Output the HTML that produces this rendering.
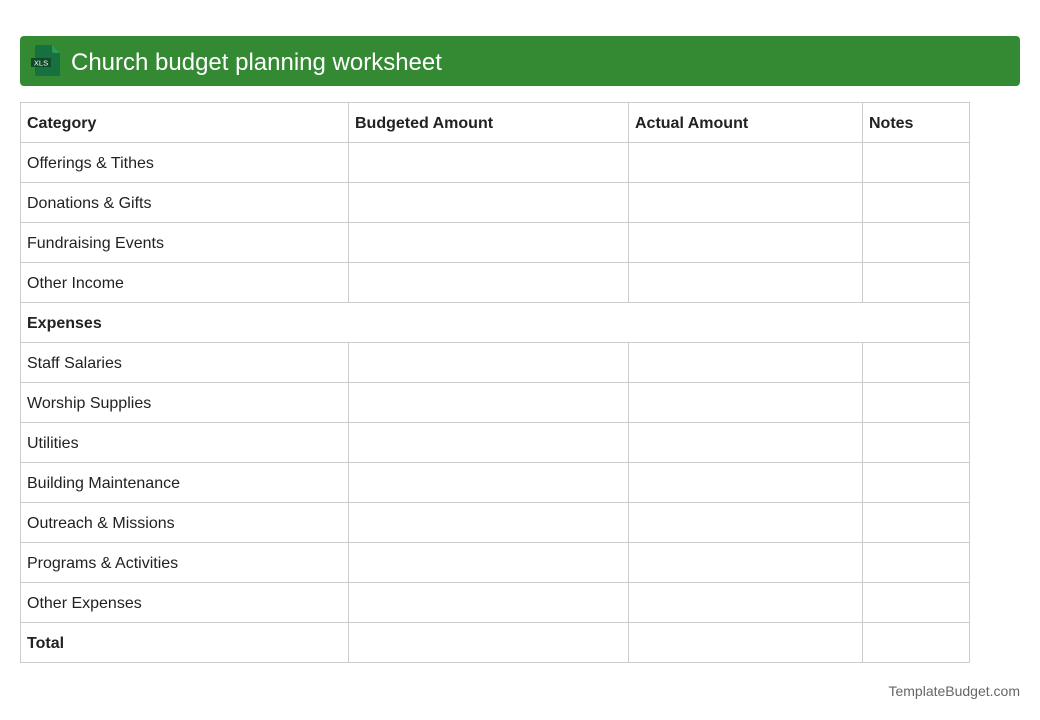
<!DOCTYPE html>
<html><head><meta charset="utf-8"><style>
body{margin:0;background:#fff;font-family:"Liberation Sans",Arial,sans-serif;width:1040px;height:720px;position:relative;overflow:hidden}
.hdr{position:absolute;left:20px;top:36px;width:1000px;height:50px;background:#338a33;border-radius:4px}
.hdr .t{position:absolute;left:51px;top:13px;color:#fff;font-size:24px;line-height:28px}
.hdr svg{position:absolute;left:10px;top:8px}
table{position:absolute;left:20px;top:102px;border-collapse:collapse;table-layout:fixed}
td{border:1px solid #ccc;height:39px;padding:2px 0 0 6px;font-size:16px;color:#222;box-sizing:border-box}
tr{height:40px}
b{font-weight:bold}
.ft{position:absolute;right:20px;top:683px;font-size:14px;color:#666}
</style></head><body>
<div class="hdr">
<svg width="32" height="34" viewBox="0 0 32 34"><path d="M7 1h15l8 8v21a2 2 0 0 1-2 2H7a2 2 0 0 1-2-2V3a2 2 0 0 1 2-2z" fill="#17703f"/><path d="M22 1v6a2 2 0 0 0 2 2h6z" fill="#2c9a5a"/><rect x="1" y="14" width="20" height="9" fill="#0f4d2a"/><text x="11" y="21.5" font-size="7.5" fill="#fff" text-anchor="middle" font-family="Liberation Sans,sans-serif">XLS</text></svg>
<div class="t">Church budget planning worksheet</div></div>
<table>
<colgroup><col style="width:328px"><col style="width:280px"><col style="width:234px"><col style="width:107px"></colgroup>
<tr><td><b>Category</b></td><td><b>Budgeted Amount</b></td><td><b>Actual Amount</b></td><td><b>Notes</b></td></tr>
<tr><td>Offerings &amp; Tithes</td><td></td><td></td><td></td></tr>
<tr><td>Donations &amp; Gifts</td><td></td><td></td><td></td></tr>
<tr><td>Fundraising Events</td><td></td><td></td><td></td></tr>
<tr><td>Other Income</td><td></td><td></td><td></td></tr>
<tr><td colspan="4"><b>Expenses</b></td></tr>
<tr><td>Staff Salaries</td><td></td><td></td><td></td></tr>
<tr><td>Worship Supplies</td><td></td><td></td><td></td></tr>
<tr><td>Utilities</td><td></td><td></td><td></td></tr>
<tr><td>Building Maintenance</td><td></td><td></td><td></td></tr>
<tr><td>Outreach &amp; Missions</td><td></td><td></td><td></td></tr>
<tr><td>Programs &amp; Activities</td><td></td><td></td><td></td></tr>
<tr><td>Other Expenses</td><td></td><td></td><td></td></tr>
<tr><td><b>Total</b></td><td></td><td></td><td></td></tr>
</table>
<div class="ft">TemplateBudget.com</div>
</body></html>
